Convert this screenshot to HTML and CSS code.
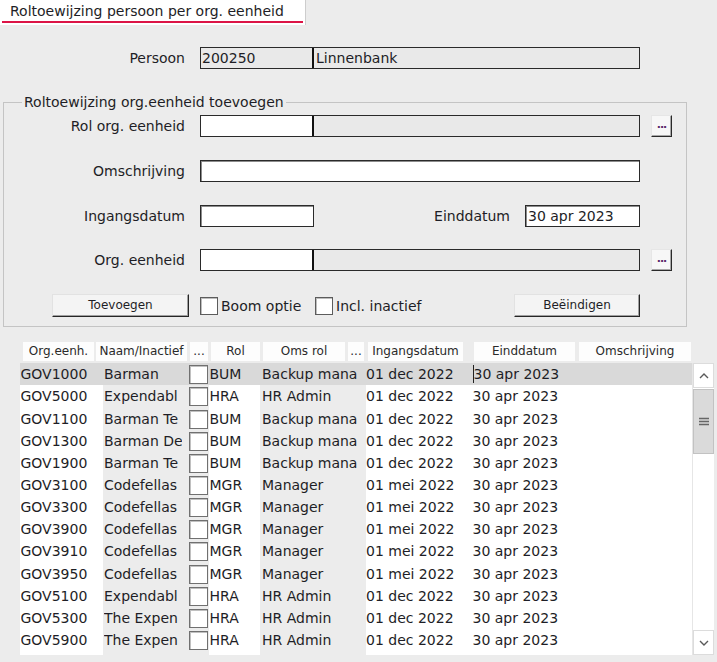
FILE: index.html
```html
<!DOCTYPE html>
<html lang="nl">
<head>
<meta charset="utf-8">
<title>Roltoewijzing persoon per org. eenheid</title>
<link rel="stylesheet" href="styles.css">
</head>
<body>
<div class="app">
  <div class="tab"><span class="tab-label">Roltoewijzing persoon per org. eenheid</span></div>

  <div class="form-row persoon-row">
    <span class="lbl lbl-outer">Persoon</span>
    <div class="field split wide">
      <span class="part part-code grey">200250</span>
      <span class="part part-name grey">Linnenbank</span>
    </div>
  </div>

  <fieldset class="group">
    <legend class="group-title">Roltoewijzing org.eenheid toevoegen</legend>
    <div class="group-body">
      <div class="form-row">
        <span class="lbl">Rol org. eenheid</span>
        <div class="field split wide">
          <span class="part part-code"></span>
          <span class="part part-name grey"></span>
        </div>
        <span class="dots-btn">...</span>
      </div>
      <div class="form-row">
        <span class="lbl">Omschrijving</span>
        <div class="field wide"></div>
      </div>
      <div class="form-row">
        <span class="lbl">Ingangsdatum</span>
        <div class="field date"></div>
        <span class="lbl lbl-end">Einddatum</span>
        <div class="field date date-end">30 apr 2023</div>
      </div>
      <div class="form-row">
        <span class="lbl">Org. eenheid</span>
        <div class="field split wide">
          <span class="part part-code"></span>
          <span class="part part-name grey"></span>
        </div>
        <span class="dots-btn">...</span>
      </div>
      <div class="form-row button-row">
        <span class="btn btn-add">Toevoegen</span>
        <span class="check check-boom"><span class="box"></span><span class="check-text">Boom optie</span></span>
        <span class="check"><span class="box"></span><span class="check-text">Incl. inactief</span></span>
        <span class="btn btn-end">Beëindigen</span>
      </div>
    </div>
  </fieldset>

  <div class="grid">
    <div class="grid-head">
      <span class="hcell h-org">Org.eenh.</span>
      <span class="hcell h-naam">Naam/Inactief</span>
      <span class="hcell h-dots">...</span>
      <span class="hcell h-rol">Rol</span>
      <span class="hcell h-oms">Oms rol</span>
      <span class="hcell h-dots2">...</span>
      <span class="hcell h-ing">Ingangsdatum</span>
      <span class="hcell h-eind">Einddatum</span>
      <span class="hcell h-omsch">Omschrijving</span>
    </div>
    <div class="grid-body">
      <div class="rows">
        <div class="row selected">
          <span class="cell c-org"><span class="ct">GOV1000</span></span>
          <span class="cell c-naam"><span class="ct">Barman</span></span>
          <span class="cell c-chk"><span class="cbox"></span></span>
          <span class="cell c-rol"><span class="ct">BUM</span></span>
          <span class="cell c-oms"><span class="ct">Backup mana</span></span>
          <span class="cell c-ing"><span class="ct">01 dec 2022</span></span>
          <span class="cell c-eind"><span class="caret"></span><span class="ct ct-inline">30 apr 2023</span></span>
        </div>
        <div class="row">
          <span class="cell c-org"><span class="ct">GOV5000</span></span>
          <span class="cell c-naam"><span class="ct">Expendabl</span></span>
          <span class="cell c-chk"><span class="cbox"></span></span>
          <span class="cell c-rol"><span class="ct">HRA</span></span>
          <span class="cell c-oms"><span class="ct">HR Admin</span></span>
          <span class="cell c-ing"><span class="ct">01 dec 2022</span></span>
          <span class="cell c-eind"><span class="ct">30 apr 2023</span></span>
        </div>
        <div class="row">
          <span class="cell c-org"><span class="ct">GOV1100</span></span>
          <span class="cell c-naam"><span class="ct">Barman Te</span></span>
          <span class="cell c-chk"><span class="cbox"></span></span>
          <span class="cell c-rol"><span class="ct">BUM</span></span>
          <span class="cell c-oms"><span class="ct">Backup mana</span></span>
          <span class="cell c-ing"><span class="ct">01 dec 2022</span></span>
          <span class="cell c-eind"><span class="ct">30 apr 2023</span></span>
        </div>
        <div class="row">
          <span class="cell c-org"><span class="ct">GOV1300</span></span>
          <span class="cell c-naam"><span class="ct">Barman De</span></span>
          <span class="cell c-chk"><span class="cbox"></span></span>
          <span class="cell c-rol"><span class="ct">BUM</span></span>
          <span class="cell c-oms"><span class="ct">Backup mana</span></span>
          <span class="cell c-ing"><span class="ct">01 dec 2022</span></span>
          <span class="cell c-eind"><span class="ct">30 apr 2023</span></span>
        </div>
        <div class="row">
          <span class="cell c-org"><span class="ct">GOV1900</span></span>
          <span class="cell c-naam"><span class="ct">Barman Te</span></span>
          <span class="cell c-chk"><span class="cbox"></span></span>
          <span class="cell c-rol"><span class="ct">BUM</span></span>
          <span class="cell c-oms"><span class="ct">Backup mana</span></span>
          <span class="cell c-ing"><span class="ct">01 dec 2022</span></span>
          <span class="cell c-eind"><span class="ct">30 apr 2023</span></span>
        </div>
        <div class="row">
          <span class="cell c-org"><span class="ct">GOV3100</span></span>
          <span class="cell c-naam"><span class="ct">Codefellas</span></span>
          <span class="cell c-chk"><span class="cbox"></span></span>
          <span class="cell c-rol"><span class="ct">MGR</span></span>
          <span class="cell c-oms"><span class="ct">Manager</span></span>
          <span class="cell c-ing"><span class="ct">01 mei 2022</span></span>
          <span class="cell c-eind"><span class="ct">30 apr 2023</span></span>
        </div>
        <div class="row">
          <span class="cell c-org"><span class="ct">GOV3300</span></span>
          <span class="cell c-naam"><span class="ct">Codefellas</span></span>
          <span class="cell c-chk"><span class="cbox"></span></span>
          <span class="cell c-rol"><span class="ct">MGR</span></span>
          <span class="cell c-oms"><span class="ct">Manager</span></span>
          <span class="cell c-ing"><span class="ct">01 mei 2022</span></span>
          <span class="cell c-eind"><span class="ct">30 apr 2023</span></span>
        </div>
        <div class="row">
          <span class="cell c-org"><span class="ct">GOV3900</span></span>
          <span class="cell c-naam"><span class="ct">Codefellas</span></span>
          <span class="cell c-chk"><span class="cbox"></span></span>
          <span class="cell c-rol"><span class="ct">MGR</span></span>
          <span class="cell c-oms"><span class="ct">Manager</span></span>
          <span class="cell c-ing"><span class="ct">01 mei 2022</span></span>
          <span class="cell c-eind"><span class="ct">30 apr 2023</span></span>
        </div>
        <div class="row">
          <span class="cell c-org"><span class="ct">GOV3910</span></span>
          <span class="cell c-naam"><span class="ct">Codefellas</span></span>
          <span class="cell c-chk"><span class="cbox"></span></span>
          <span class="cell c-rol"><span class="ct">MGR</span></span>
          <span class="cell c-oms"><span class="ct">Manager</span></span>
          <span class="cell c-ing"><span class="ct">01 mei 2022</span></span>
          <span class="cell c-eind"><span class="ct">30 apr 2023</span></span>
        </div>
        <div class="row">
          <span class="cell c-org"><span class="ct">GOV3950</span></span>
          <span class="cell c-naam"><span class="ct">Codefellas</span></span>
          <span class="cell c-chk"><span class="cbox"></span></span>
          <span class="cell c-rol"><span class="ct">MGR</span></span>
          <span class="cell c-oms"><span class="ct">Manager</span></span>
          <span class="cell c-ing"><span class="ct">01 mei 2022</span></span>
          <span class="cell c-eind"><span class="ct">30 apr 2023</span></span>
        </div>
        <div class="row">
          <span class="cell c-org"><span class="ct">GOV5100</span></span>
          <span class="cell c-naam"><span class="ct">Expendabl</span></span>
          <span class="cell c-chk"><span class="cbox"></span></span>
          <span class="cell c-rol"><span class="ct">HRA</span></span>
          <span class="cell c-oms"><span class="ct">HR Admin</span></span>
          <span class="cell c-ing"><span class="ct">01 dec 2022</span></span>
          <span class="cell c-eind"><span class="ct">30 apr 2023</span></span>
        </div>
        <div class="row">
          <span class="cell c-org"><span class="ct">GOV5300</span></span>
          <span class="cell c-naam"><span class="ct">The Expen</span></span>
          <span class="cell c-chk"><span class="cbox"></span></span>
          <span class="cell c-rol"><span class="ct">HRA</span></span>
          <span class="cell c-oms"><span class="ct">HR Admin</span></span>
          <span class="cell c-ing"><span class="ct">01 dec 2022</span></span>
          <span class="cell c-eind"><span class="ct">30 apr 2023</span></span>
        </div>
        <div class="row">
          <span class="cell c-org"><span class="ct">GOV5900</span></span>
          <span class="cell c-naam"><span class="ct">The Expen</span></span>
          <span class="cell c-chk"><span class="cbox"></span></span>
          <span class="cell c-rol"><span class="ct">HRA</span></span>
          <span class="cell c-oms"><span class="ct">HR Admin</span></span>
          <span class="cell c-ing"><span class="ct">01 dec 2022</span></span>
          <span class="cell c-eind"><span class="ct">30 apr 2023</span></span>
        </div>
        <div class="row row-filler">
          <span class="cell c-org"></span>
          <span class="cell c-naam"></span>
          <span class="cell c-chk"></span>
          <span class="cell c-rol"></span>
          <span class="cell c-oms"></span>
          <span class="cell c-ing"></span>
          <span class="cell c-eind"></span>
        </div>
      </div>
      <div class="vscroll">
        <span class="sb-btn">
          <svg width="10" height="6" viewBox="0 0 10 6"><path d="M1 5 L5 1 L9 5" fill="none" stroke="#5a5a5a" stroke-width="1.4"/></svg>
        </span>
        <span class="sb-thumb">
          <svg width="10" height="9" viewBox="0 0 10 9"><path d="M0 1.5h10M0 4.5h10M0 7.5h10" stroke="#666" stroke-width="1.6"/></svg>
        </span>
        <span class="sb-track"></span>
        <span class="sb-btn">
          <svg width="10" height="6" viewBox="0 0 10 6"><path d="M1 1 L5 5 L9 1" fill="none" stroke="#5a5a5a" stroke-width="1.4"/></svg>
        </span>
      </div>
    </div>
  </div>
</div>
</body>
</html>
```

FILE: styles.css
```css
* { box-sizing: border-box; }
html, body { margin: 0; padding: 0; }
body {
  background: #ececec;
  font-family: "DejaVu Sans", Verdana, sans-serif;
  font-size: 14px;
  color: #1e1e26;
  width: 717px;
  height: 662px;
  overflow: hidden;
}

/* tab */
.tab {
  width: 306px;
  height: 25px;
  background: #fff;
  border-right: 1px solid #cdcdcd;
  padding: 0 2px;
}
.tab-label {
  display: block;
  line-height: 17px;
  padding: 3px 0 1px 8px;
  border-bottom: 2px solid #dc1446;
  white-space: nowrap;
}

/* form rows */
.form-row {
  display: flex;
  align-items: center;
  height: 22px;
}
.persoon-row { margin-top: 22px; }
.lbl {
  width: 181px;
  margin-right: 15px;
  text-align: right;
  white-space: nowrap;
}
.lbl-outer { width: 185px; }
.lbl-end { width: 196px; }

.field {
  height: 22px;
  border: 1px solid #2a2a2a;
  box-shadow: inset 1px 1px 0 #8c8c8c;
  background: #fff;
  line-height: 20px;
  padding-left: 1px;
  white-space: nowrap;
}
.wide { width: 440px; }
.date { width: 114px; }
.date-end { width: 115px; padding-left: 2px; }
.split { display: flex; padding-left: 0; background: #e9e9e9; }
.part { display: block; height: 100%; padding-left: 1px; }
.part-code { width: 113px; background: #fff; border-right: 2px solid #111; }
.part-name { flex: 1; padding-left: 2px; }
.grey { background: #e9e9e9; }

.dots-btn {
  width: 21px;
  height: 22px;
  margin-left: 11px;
  background: #f7f7f7;
  border-top: 1px solid #e6e6e6;
  border-left: 1px solid #e6e6e6;
  border-right: 1px solid #2a2a2a;
  border-bottom: 1px solid #2a2a2a;
  box-shadow: inset -1px -1px 0 #a8a8a8;
  color: #5a2a6a;
  font-size: 11px;
  font-weight: bold;
  line-height: 18px;
  text-align: center;
  letter-spacing: -1px;
}

/* group box */
.group {
  margin: 25px 0 0 3px;
  width: 684px;
  border: 1px solid #c4c4c4;
  padding: 5px 0 9px 0;
  min-inline-size: 0;
}
.group-title {
  margin-left: 18px;
  padding: 0 2px;
  line-height: 16px;
}
.group-body {
  display: flex;
  flex-direction: column;
  gap: 22.8px;
}

.button-row { height: 23px; }
.btn {
  height: 23px;
  background: #f4f4f4;
  border-top: 1px solid #e2e2e2;
  border-left: 1px solid #e2e2e2;
  border-right: 1px solid #262626;
  border-bottom: 1px solid #262626;
  box-shadow: inset -1px -1px 0 #a0a0a0;
  font-size: 12px;
  line-height: 20px;
  text-align: center;
}
.btn-add { width: 137px; margin-left: 48px; }
.btn-end { width: 126px; margin-left: auto; margin-right: 46px; }
.check {
  display: flex;
  align-items: center;
  white-space: nowrap;
}
.check-boom { width: 115px; margin-left: 11px; }
.box {
  width: 18px;
  height: 18px;
  background: #fff;
  border: 1px solid #5c5c5c;
  box-shadow: inset 1px 1px 0 #bdbdbd;
}
.check-text { margin-left: 3px; }

/* grid */
.grid { margin-top: 15px; }
.grid-head {
  display: flex;
  height: 19px;
  padding-left: 23px;
  font-size: 12px;
  line-height: 19px;
  color: #2a2a2a;
}
.hcell {
  background: #fdfdfd;
  text-align: center;
  white-space: nowrap;
  overflow: hidden;
}
.h-org { width: 71px; }
.h-naam { width: 91px; margin-left: 2px; }
.h-dots { width: 18px; margin-left: 3px; }
.h-rol { width: 49px; margin-left: 3px; }
.h-oms { width: 82px; margin-left: 3px; }
.h-dots2 { width: 16px; margin-left: 3px; }
.h-ing { width: 95px; margin-left: 4px; }
.h-eind { width: 101px; margin-left: 11px; }
.h-omsch { width: 112px; margin-left: 4px; }

.grid-body {
  display: flex;
  height: 292px;
  margin: 2px 0 0 20px;
}
.rows {
  width: 672px;
  display: flex;
  flex-direction: column;
}
.row {
  display: grid;
  grid-template-columns: 83px 85px 21px 51px 106px 106px 1fr;
  height: 22.17px;
  flex: none;
  line-height: 22px;
}
.row-filler { flex: 1; height: auto; }
.cell { display: block; }
.ct {
  display: block;
  overflow: hidden;
  white-space: nowrap;
}
.ct-inline { display: inline-block; vertical-align: top; }
.c-org { background: #fff; padding-left: 0.5px; }
.c-naam { background: #ececec; padding: 0 6px 0 1px; }
.c-chk { background: #ececec; padding: 2px 0 0 1px; }
.c-rol { background: #fff; padding-left: 0.5px; }
.c-oms { background: #ececec; padding: 0 4px 0 2px; }
.c-ing { background: #fff; }
.c-eind { background: #fff; padding-left: 0.5px; white-space: nowrap; }
.selected .cell { background: #d9d9d9; }
.cbox {
  display: block;
  width: 19px;
  height: 19px;
  background: #fff;
  border: 1px solid #707070;
  box-shadow: inset 1px 1px 0 #c0c0c0;
}
.caret {
  display: inline-block;
  width: 1px;
  height: 18px;
  background: #222;
  vertical-align: top;
  margin-top: 2px;
}

/* scrollbar */
.vscroll {
  width: 22px;
  display: flex;
  flex-direction: column;
  background: #fff;
  border-left: 1px solid #e6e6e6;
}
.sb-btn {
  height: 25px;
  display: flex;
  align-items: center;
  justify-content: center;
  background: #fff;
  border: 1px solid #dcdcdc;
}
.sb-thumb {
  height: 65px;
  margin-top: 1px;
  display: flex;
  align-items: center;
  justify-content: center;
  background: #dadada;
  border: 1px solid #c2c2c2;
}
.sb-track { flex: 1; background: #fff; }
```
